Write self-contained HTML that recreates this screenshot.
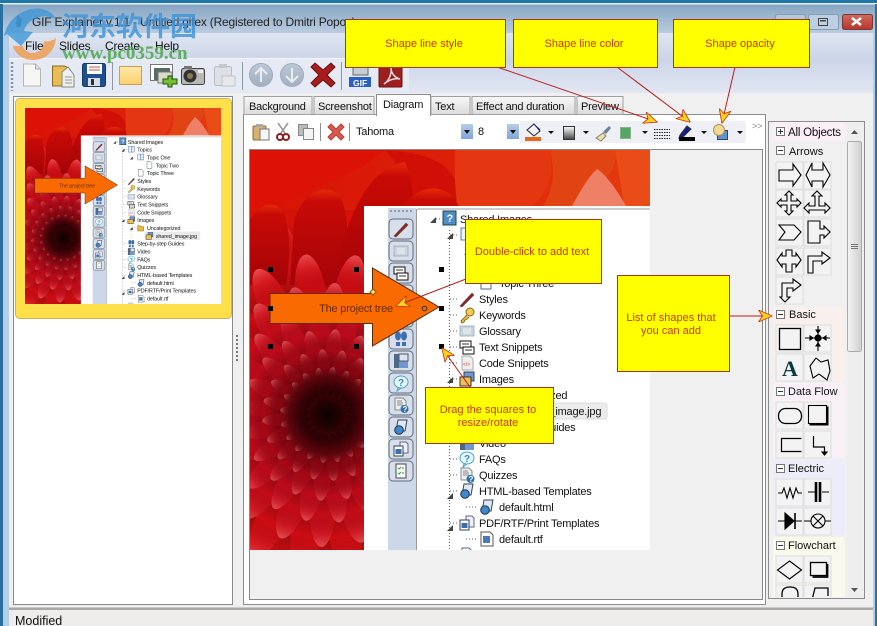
<!DOCTYPE html>
<html><head><meta charset="utf-8"><title>GIF Explainer</title>
<style>
html,body{margin:0;padding:0;background:#f0f0f0;width:877px;height:626px;overflow:hidden}
body>svg{display:block;position:absolute;left:0;top:0;overflow:hidden}
text{font-family:"Liberation Sans","DejaVu Sans",sans-serif;font-size:11px;fill:#111}
.call{font-size:11px;fill:#c83a00;text-anchor:middle}
.t{letter-spacing:-.2px}
.m{font-size:12px;letter-spacing:-.2px}
</style></head><body>
<svg width="877" height="626" viewBox="0 0 877 626" xmlns="http://www.w3.org/2000/svg">
<defs>
<linearGradient id="title" x1="0" y1="0" x2="0" y2="1"><stop offset="0" stop-color="#7e9fbe"/><stop offset="1" stop-color="#c0d0e2"/></linearGradient>
<linearGradient id="band" x1="0" y1="0" x2="0" y2="1"><stop offset="0" stop-color="#dfe6f1"/><stop offset=".45" stop-color="#ccd5e8"/><stop offset="1" stop-color="#e2e6f2"/></linearGradient>
<linearGradient id="tab" x1="0" y1="0" x2="0" y2="1"><stop offset="0" stop-color="#f8f8f8"/><stop offset="1" stop-color="#dcdcdc"/></linearGradient>
<linearGradient id="shade" x1="0" y1="1" x2="0" y2="0"><stop offset="0" stop-color="#000" stop-opacity=".62"/><stop offset=".6" stop-color="#000" stop-opacity="0"/><stop offset=".85" stop-color="#ff6060" stop-opacity=".18"/><stop offset="1" stop-color="#ff9090" stop-opacity=".5"/></linearGradient>
<radialGradient id="core"><stop offset="0" stop-color="#0e0101"/><stop offset=".3" stop-color="#1e0202" stop-opacity=".95"/><stop offset="1" stop-color="#300205" stop-opacity="0"/></radialGradient>
<linearGradient id="bp" x1="0" y1="0" x2="0" y2="1"><stop offset="0" stop-color="#e42a08"/><stop offset=".12" stop-color="#c80a06"/><stop offset="1" stop-color="#a40408"/></linearGradient>
<linearGradient id="topbg" x1="0" y1="0" x2="1" y2="0"><stop offset="0" stop-color="#d81206"/><stop offset=".5" stop-color="#dc2008"/><stop offset="1" stop-color="#e63c10"/></linearGradient>
<linearGradient id="ddb" x1="0" y1="0" x2="0" y2="1"><stop offset="0" stop-color="#b8cdea"/><stop offset="1" stop-color="#7fa6d8"/></linearGradient>
<linearGradient id="gbox" x1="0" y1="0" x2="0" y2="1"><stop offset="0" stop-color="#fff"/><stop offset="1" stop-color="#444"/></linearGradient>
<linearGradient id="red" x1="0" y1="0" x2="0" y2="1"><stop offset="0" stop-color="#d06a60"/><stop offset="1" stop-color="#b8352a"/></linearGradient>
<linearGradient id="folder" x1="0" y1="0" x2="0" y2="1"><stop offset="0" stop-color="#ffe9a8"/><stop offset="1" stop-color="#fbd06c"/></linearGradient>
<linearGradient id="scr" x1="0" y1="0" x2="1" y2="0"><stop offset="0" stop-color="#f4f4f4"/><stop offset="1" stop-color="#cfcfcf"/></linearGradient>
<linearGradient id="cir" x1="0" y1="0" x2="0" y2="1"><stop offset="0" stop-color="#bcc8d6"/><stop offset="1" stop-color="#a2afbe"/></linearGradient>

<g id="pet"><ellipse cx="0" cy="-70" rx="10" ry="30"/><ellipse cx="0" cy="-70" rx="10" ry="30" fill="url(#shade)"/></g>
<g id="pe3"><use href="#pet"/><use href="#pet" transform="rotate(18)"/><use href="#pet" transform="rotate(36)"/></g>
<g id="ring"><use href="#pe3"/><use href="#pe3" transform="rotate(54)"/><use href="#pe3" transform="rotate(108)"/><use href="#pe3" transform="rotate(162)"/><use href="#pe3" transform="rotate(216)"/><use href="#pe3" transform="rotate(270)"/><use href="#pe3" transform="rotate(324)"/></g>

<g id="i-book"><rect x="2" y="2" width="6" height="12" fill="#eef4fb" stroke="#5a7fa8"/><rect x="8" y="2" width="6" height="12" fill="#dfe9f6" stroke="#5a7fa8"/></g>
<g id="i-doc"><path d="M3 1h7l3 3v11H3z" fill="#fff" stroke="#566a80"/></g>
<g id="i-pen"><path d="M1 15L13 2l2 2L3 16z" fill="#9c1c1c" stroke="#555" stroke-width=".6"/></g>
<g id="i-key"><circle cx="11" cy="5" r="4" fill="#f0cc50" stroke="#8a6a10"/><path d="M8 8L2 14l1 2 2-1 1-2 2-1 2-2" fill="#f0cc50" stroke="#8a6a10"/></g>
<g id="i-gl"><rect x="1" y="3" width="14" height="10" fill="#c8d4e2" stroke="#a6b4c4"/><rect x="4" y="5" width="8" height="6" fill="#dfe3e8"/></g>
<g id="i-sn"><rect x="1" y="2" width="11" height="7" fill="#fff" stroke="#111"/><rect x="4" y="8" width="11" height="7" fill="#fff" stroke="#111"/><path d="M3 5h7M6 11h7" stroke="#333"/></g>
<g id="i-code"><path d="M3 1h8l3 3v11H3z" fill="#eee" stroke="#aaa"/><text x="4" y="11" style="font-size:5px;fill:#d04040">&lt;/&gt;</text></g>
<g id="i-im"><rect x="5" y="1" width="10" height="9" fill="#6f97d0" stroke="#345"/><rect x="1" y="6" width="11" height="9" fill="#f2c050" stroke="#333"/></g>
<g id="i-fo"><path d="M2 3h5l2 2h5v9H2z" fill="#e8b840" stroke="#8a6a18"/></g>
<g id="i-foot"><ellipse cx="5" cy="5" rx="3" ry="4.500" fill="#3d6fb0"/><ellipse cx="11" cy="5" rx="3" ry="4.500" fill="#3d6fb0"/><rect x="3" y="11" width="4" height="4" fill="#3d6fb0"/><rect x="9" y="11" width="4" height="4" fill="#3d6fb0"/></g>
<g id="i-film"><rect x="1" y="1" width="5" height="14" fill="#4a6a8a"/><rect x="6" y="8" width="9" height="7" fill="#6f97d0"/><rect x="6" y="1" width="9" height="7" fill="#dde4ee" stroke="#556"/></g>
<g id="i-faq"><ellipse cx="8" cy="7" rx="7" ry="6" fill="#e8f6fb" stroke="#43a5cc"/><path d="M5 13l-1 3 4-3z" fill="#e8f6fb" stroke="#43a5cc"/><text x="5" y="11" style="font-size:10px;fill:#2f8db8;font-weight:bold">?</text></g>
<g id="i-qz"><path d="M2 1h8l3 3v9H2z" fill="#eee" stroke="#888"/><path d="M4 4h5M4 6h6M4 8h6" stroke="#889"/><circle cx="11.500" cy="12" r="4" fill="#2f6fb0"/><text x="9.500" y="15" style="font-size:8px;fill:#fff;font-weight:bold">?</text></g>
<g id="i-ht"><path d="M5 1h9l-2 11H3z" fill="#dfe9f6" stroke="#345"/><circle cx="6" cy="11" r="4.300" fill="#3d86d0" stroke="#234"/></g>
<g id="i-wd"><path d="M7 1h6l2 2v9H7z" fill="#eef" stroke="#667"/><rect x="1" y="5" width="9" height="10" fill="#fff" stroke="#345"/><rect x="2.500" y="8" width="6" height="5" fill="#3d6fb0"/></g>
<g id="i-wd1"><path d="M2 1h9l3 3v11H2z" fill="#fff" stroke="#555"/><rect x="4" y="5" width="7" height="7" fill="#4a78b8"/></g>
<g id="i-qs"><rect x="1" y="1" width="13" height="14" fill="#4f8cc8" stroke="#244"/><text x="4.500" y="12" style="font-size:11px;fill:#fff;font-weight:bold">?</text></g>
<g id="i-tk"><rect x="3" y="1" width="10" height="14" fill="#f6fbf6" stroke="#445"/><path d="M5 5l1 1 2-2M5 10l1 1 2-2" stroke="#3a3" fill="none"/><path d="M9 5h2M9 10h2" stroke="#667"/></g>
<path id="exp" d="M0 4l6-6v6z" fill="#444"/>

<g id="btn"><rect x="-12" y="-10" width="24" height="20" rx="4" fill="#d8dfea" stroke="#5f6d7a"/></g>

<clipPath id="cp"><rect width="400" height="400"/></clipPath>
<g id="dia" clip-path="url(#cp)">
 <rect width="400" height="400" fill="#6a0408"/>
 <g transform="translate(78,265)">
  <use href="#ring" transform="rotate(7) scale(2.6)" fill="#d81208"/>
  <use href="#ring" transform="rotate(2) scale(2.05)" fill="#d41010"/>
 </g>
 <!-- big upper petals -->
 <rect width="400" height="60" fill="url(#topbg)"/>
 <path d="M205 0H300C305 30 295 50 275 60H205z" fill="#e43610"/>
 <path d="M300 0H365C370 20 350 30 340 60H290C305 40 305 20 300 0z" fill="#e04412"/>
 <path d="M365 0H400V60H375z" fill="#ea4c18"/>
 <path d="M347 19C357 25 370 45 376 56H322C328 45 338 27 347 19z" fill="#ee8068"/>
 <path d="M135 0C160 2 195 6 205 30L207 60H160L145 12z" fill="#d01006"/>
 <path d="M0 0H135C110 20 85 30 60 40L0 70z" fill="#dc1206"/>
 <path d="M0 72C4 58 22 48 32 60C42 80 40 110 36 135L0 135z" fill="url(#bp)"/>
 <path d="M44 72C50 48 70 30 90 45C100 70 100 100 95 135L40 135z" fill="url(#bp)"/>
 <path d="M90 105C100 60 122 16 155 12C168 40 165 85 150 135L95 135z" fill="url(#bp)"/>
 <path d="M150 58C165 40 185 30 205 48L210 60L150 135z" fill="url(#bp)"/>
 <g transform="translate(78,265)">
  <use href="#ring" transform="rotate(10) scale(1.62)" fill="#cc0c12"/>
  <use href="#ring" transform="rotate(3) scale(1.32)" fill="#c40c18"/>
  <use href="#ring" transform="rotate(12) scale(1.08)" fill="#bc0a1a"/>
  <use href="#ring" transform="rotate(5) scale(.86)" fill="#a80816"/>
  <use href="#ring" transform="rotate(13) scale(.66)" fill="#8a0612"/>
  <use href="#ring" transform="rotate(6) scale(.48)" fill="#5e040c"/>
  <circle r="42" fill="url(#core)"/>
 </g>
 <rect x="114" y="56" width="286" height="344" fill="#fff"/>
 <rect x="138" y="58" width="28" height="342" fill="#cdd7ea"/>
 <path d="M140 61h24" stroke="#999" stroke-width="2" stroke-dasharray="2 2"/>
 <path d="M166.500 59V400M167 59H400" stroke="#9a9a9a" fill="none"/>
 <g transform="translate(151,79)"><use href="#btn"/><use href="#i-pen" x="-8" y="-8"/></g>
 <g transform="translate(151,101)"><use href="#btn"/><use href="#i-gl" x="-8" y="-8"/></g>
 <g transform="translate(151,123)"><use href="#btn"/><use href="#i-sn" x="-8" y="-8"/></g>
 <g transform="translate(151,145)"><use href="#btn"/></g>
 <g transform="translate(151,167)"><use href="#btn"/></g>
 <g transform="translate(151,189)"><use href="#btn"/><use href="#i-foot" x="-8" y="-8"/></g>
 <g transform="translate(151,211)"><use href="#btn"/><use href="#i-film" x="-8" y="-8"/></g>
 <g transform="translate(151,233)"><use href="#btn"/><use href="#i-faq" x="-8" y="-8"/></g>
 <g transform="translate(151,255)"><use href="#btn"/><use href="#i-qz" x="-8" y="-8"/></g>
 <g transform="translate(151,277)"><use href="#btn"/><use href="#i-ht" x="-8" y="-8"/></g>
 <g transform="translate(151,299)"><use href="#btn"/><use href="#i-wd" x="-8" y="-8"/></g>
 <g transform="translate(151,321)"><use href="#btn"/><use href="#i-tk" x="-8" y="-8"/></g>
 <g stroke="#666" stroke-dasharray="1 2" fill="none">
  <path d="M199.500 80V400M216.500 240V265"/>
  <path d="M186 69h6M200 85h8M200 149h8M200 165h8M200 181h8M200 197h8M200 213h8M200 229h8M200 277h8M200 293h8M200 309h8M200 325h8M200 341h8M200 373h8M216 357h12M216 389h12M216 245h10"/>
 </g>
 <rect x="245" y="253" width="112" height="16" rx="2" fill="#ececec" stroke="#ddd"/>
 <use href="#exp" x="180" y="69"/><use href="#i-qs" x="192" y="60"/><text x="210" y="73" class="t">Shared Images</text>
 <use href="#exp" x="197" y="85"/><use href="#i-book" x="209" y="76"/><text x="229" y="89" class="t">Topics</text>
 <use href="#exp" x="214" y="101"/><use href="#i-book" x="228" y="92"/><text x="249" y="105" class="t">Topic One</text>
 <use href="#i-doc" x="246" y="108"/><text x="267" y="121" class="t">Topic Two</text>
 <use href="#i-doc" x="228" y="124"/><text x="249" y="137" class="t">Topic Three</text>
 <use href="#i-pen" x="209" y="141"/><text x="229" y="153" class="t">Styles</text>
 <use href="#i-key" x="209" y="157"/><text x="229" y="169" class="t">Keywords</text>
 <use href="#i-gl" x="209" y="173"/><text x="229" y="185" class="t">Glossary</text>
 <use href="#i-sn" x="209" y="189"/><text x="229" y="201" class="t">Text Snippets</text>
 <use href="#i-code" x="209" y="205"/><text x="229" y="217" class="t">Code Snippets</text>
 <use href="#exp" x="197" y="229"/><use href="#i-im" x="209" y="221"/><text x="229" y="233" class="t">Images</text>
 <use href="#exp" x="214" y="245"/><use href="#i-fo" x="228" y="237"/><text x="249" y="249" class="t">Uncategorized</text>
 <use href="#i-im" x="246" y="253"/><text x="267" y="265" class="t">shared_image.jpg</text>
 <use href="#i-foot" x="209" y="269"/><text x="229" y="281" class="t">Step-by-step Guides</text>
 <use href="#i-film" x="209" y="285"/><text x="229" y="297" class="t">Video</text>
 <use href="#i-faq" x="209" y="301"/><text x="229" y="313" class="t">FAQs</text>
 <use href="#i-qz" x="209" y="317"/><text x="229" y="329" class="t">Quizzes</text>
 <use href="#exp" x="197" y="345"/><use href="#i-ht" x="209" y="333"/><text x="229" y="345" class="t">HTML-based Templates</text>
 <use href="#i-ht" x="229" y="349"/><text x="249" y="361" class="t">default.html</text>
 <use href="#exp" x="197" y="377"/><use href="#i-wd" x="209" y="365"/><text x="229" y="377" class="t">PDF/RTF/Print Templates</text>
 <use href="#i-wd1" x="229" y="381"/><text x="249" y="393" class="t">default.rtf</text>
 <use href="#i-doc" x="209" y="397"/>
 <path d="M20 143.500H122.500V118L189 157 122.500 196V173.500H20z" fill="#f96a00" stroke="#5f2a08"/>
 <text x="106" y="162" style="text-anchor:middle;fill:#6b2c00" class="t">The project tree</text>
</g>

<g id="cell"><rect width="27" height="27" fill="#f3f3f3" stroke="#dfdfdf"/></g>
<clipPath id="pnl"><rect x="769" y="122" width="78" height="475"/></clipPath>
<marker id="ah" viewBox="0 0 14 12" refX="13.500" refY="6" markerWidth="14" markerHeight="12" markerUnits="userSpaceOnUse" orient="auto"><path d="M0 0L14 6 0 12 4 6z" fill="#f8d020" stroke="#c83010" stroke-width=".8"/></marker>
</defs>

<rect width="877" height="626" fill="#f0f0f0"/>
<rect width="877" height="36" fill="url(#title)"/>
<rect y="0" width="877" height="3" fill="#1f77a8"/>
<rect y="3" width="877" height="1.500" fill="#e6eff6"/>
<rect x="9" y="33" width="864" height="60" fill="url(#band)"/>
<rect x="0" y="4" width="3" height="622" fill="#2a6fa0"/>
<rect x="3" y="30" width="6" height="596" fill="#b4cee6"/>
<rect x="873" y="30" width="4" height="596" fill="#b4cee6"/>
<rect x="875" y="4" width="2" height="622" fill="#2a6fa0"/>

<rect x="9" y="59" width="400" height="33" fill="#e6eaf4"/>
<path d="M9 58.500H409" stroke="#f6f7fb"/>
<path d="M12 62V91" stroke="#8a96a6" stroke-width="2.500" stroke-dasharray="2 2"/>
<text x="32" y="26" class="m" style="fill:#222">GIF Explainer v.1.1 - Untitled.gifex (Registered to Dmitri Popov)</text>
<path d="M17 15l5 4-1 8h-5z" fill="#3a6a90"/>
<text x="25" y="50" class="m">File</text><text x="59" y="50" class="m">Slides</text><text x="105" y="50" class="m">Create</text><text x="155" y="50" class="m">Help</text>

<path d="M23.500 64h12l5 5v17h-17z" fill="#f6f6f4" stroke="#b8b8b0"/><path d="M35.500 64v5h5" fill="#ddd" stroke="#aaa"/>
<path d="M52.500 66h12l4 2v18h-16z" fill="#e8bd55" stroke="#8a6a20"/><path d="M62 72l6-5 6 8v12H62z" fill="#efefef" stroke="#8a8a7a"/><path d="M65 77h7M65 80h7M65 83h7" stroke="#999"/>
<rect x="82.500" y="63.500" width="23" height="23" rx="2" fill="#1e4f8e" stroke="#123a66"/><rect x="87" y="64" width="15" height="10" fill="#fff"/><path d="M89 67h11M89 70h11" stroke="#b55"/><rect x="88" y="78" width="12" height="8" fill="#d8dde4"/><rect x="91" y="79" width="3" height="6" fill="#234"/>
<path d="M112.500 62V90" stroke="#8f98a6"/>
<rect x="119.500" y="66.500" width="22" height="18" fill="url(#folder)" stroke="#c8a050"/>
<rect x="150.500" y="64.500" width="22" height="16" fill="#fff" stroke="#777"/><rect x="154" y="68" width="16" height="12" fill="#5a6a6a"/><rect x="158" y="72" width="14" height="11" fill="#d8dcc8" stroke="#777"/><path d="M168 76v3h-5v5h5v3h4v-3h5v-5h-5v-3z" fill="#74c030" stroke="#245010"/>
<rect x="181.500" y="68.500" width="23" height="16" rx="2" fill="#b8b8b4" stroke="#444"/><rect x="184" y="66" width="8" height="3" fill="#777"/><circle cx="190" cy="76" r="6.500" fill="#333"/><circle cx="190" cy="76" r="3" fill="#8a7a5a"/><rect x="198" y="70" width="5" height="3" fill="#eee"/>
<rect x="214.500" y="66.500" width="17" height="19" rx="2" fill="#dde0e4" stroke="#b6bcc4"/><rect x="219" y="64" width="8" height="4" fill="#c4c8ce"/><rect x="222" y="76" width="13" height="10" fill="#e8e8e8" stroke="#c0c4ca"/>
<path d="M242.500 62V90" stroke="#8f98a6"/>
<circle cx="261" cy="75" r="11.500" fill="url(#cir)" stroke="#9eacbc"/><path d="M261 82V68M255 74l6-6 6 6" fill="none" stroke="#e8edf2" stroke-width="2"/>
<circle cx="292" cy="75" r="11.500" fill="url(#cir)" stroke="#9eacbc"/><path d="M292 68V82M286 76l6 6 6-6" fill="none" stroke="#e8edf2" stroke-width="2"/>
<path d="M311 67l4-4 8 7 8-7 4 4-8 8 8 8-4 4-8-7-8 7-4-4 8-8z" fill="#a81c1c" stroke="#6a1010"/>
<path d="M341.500 62V90" stroke="#8f98a6"/>
<rect x="353" y="64" width="15" height="11" fill="#c6ccd4" stroke="#666"/><rect x="349" y="77" width="22" height="10" fill="#2a5fc8"/><text x="353" y="86" style="font-size:8.500px;fill:#fff;font-weight:bold">GIF</text>
<rect x="379" y="64" width="23" height="23" rx="1" fill="#9e1f1f" stroke="#6e1010"/><path d="M384 84c5-3 8-11 7-16 0 5 4 10 9 11-5-1-10 0-16 5z" fill="none" stroke="#f3e8e8" stroke-width="1.400"/>

<rect x="775.500" y="14.500" width="30" height="15" rx="2" fill="#b6c8dc" stroke="#8a9bb0"/>
<rect x="808.500" y="14.500" width="30" height="15" rx="2" fill="#bdcfe2" stroke="#8a9bb0"/><rect x="818.500" y="18.500" width="9" height="7" fill="none" stroke="#444"/><rect x="820" y="20" width="6" height="1.500" fill="#444"/>
<rect x="842.500" y="14.500" width="30" height="15" rx="2" fill="url(#red)" stroke="#7a3a3a"/><path d="M852 18l9 7M861 18l-9 7" stroke="#fff" stroke-width="2.400"/>

<rect x="13.500" y="96.500" width="219" height="508" fill="#fff" stroke="#8a8a8a"/>
<rect x="15.500" y="98.500" width="216" height="220" rx="4" fill="#ffdf4a" stroke="#c8b468"/>
<svg x="25" y="108" width="196" height="196" viewBox="0 0 400 400"><use href="#dia"/></svg>
<path d="M237 335V361" stroke="#777" stroke-width="2" stroke-dasharray="2 2"/>

<rect x="243.500" y="114.500" width="522" height="490" fill="#fff" stroke="#8c8c8c"/>
<rect x="244" y="96.500" width="68" height="18" fill="url(#tab)" stroke="#a0a0a0"/><text x="249" y="110" class="t">Background</text>
<rect x="314" y="96.500" width="60" height="18" fill="url(#tab)" stroke="#a0a0a0"/><text x="318" y="110" class="t">Screenshot</text>
<rect x="376.500" y="94.500" width="54" height="21" fill="#fff" stroke="#8c8c8c"/><path d="M377 115.500h53" stroke="#fff" stroke-width="2"/><text x="383" y="108" class="t">Diagram</text>
<rect x="431" y="96.500" width="39" height="18" fill="url(#tab)" stroke="#a0a0a0"/><text x="435" y="110" class="t">Text</text>
<rect x="472" y="96.500" width="103" height="18" fill="url(#tab)" stroke="#a0a0a0"/><text x="476" y="110" class="t">Effect and duration</text>
<rect x="577" y="96.500" width="46" height="18" fill="url(#tab)" stroke="#a0a0a0"/><text x="581" y="110" class="t">Preview</text>

<rect x="253" y="126" width="13" height="14" rx="1" fill="#d8b070" stroke="#8a6a30"/><rect x="256" y="124" width="7" height="3" fill="#aaa"/><rect x="260" y="129" width="9" height="11" fill="#f6f6f6" stroke="#777"/>
<path d="M278 123l7 10M288 123l-7 10" stroke="#999" stroke-width="1.600"/><circle cx="280" cy="137" r="3" fill="none" stroke="#8e1f1f" stroke-width="2"/><circle cx="286" cy="137" r="3" fill="none" stroke="#8e1f1f" stroke-width="2"/>
<rect x="298.500" y="124.500" width="9" height="11" fill="#bbb" stroke="#888"/><rect x="303.500" y="128.500" width="10" height="11" fill="#f4f4f4" stroke="#888"/>
<path d="M320.500 123V141M349.500 123V141" stroke="#8f8f8f"/>
<path d="M328 127l3-3 5 5 5-5 3 3-5 5 5 5-3 3-5-5-5 5-3-3 5-5z" fill="#d85a4e" stroke="#b04038"/>
<text x="356" y="135" class="t">Tahoma</text>
<rect x="461" y="124" width="12" height="15" fill="url(#ddb)"/><path d="M464 130h6l-3 4z" fill="#111"/>
<text x="478" y="135">8</text>
<rect x="507" y="124" width="12" height="15" fill="url(#ddb)"/><path d="M510 130h6l-3 4z" fill="#111"/>
<rect x="520" y="121" width="226" height="22" fill="#eef0f5"/>
<path d="M527 130l7-6 6 7-6 5z" fill="#f2f2f2" stroke="#223"/><path d="M533 123l7 6v3l-2-3z" fill="#12288a"/><rect x="525" y="137" width="16" height="4" fill="#e06a1c"/>
<path d="M548 131h6l-3 3z" fill="#111"/>
<rect x="563.500" y="126.500" width="11" height="13" fill="url(#gbox)" stroke="#333"/>
<path d="M583 131h6l-3 3z" fill="#111"/>
<path d="M596 138l7-5 3 3-5 5z" fill="#e8e0b0" stroke="#8a8060"/><path d="M603 132l6-6 2 2-5 6z" fill="#6b7f99"/>
<rect x="620.500" y="127.500" width="10" height="11" fill="#54a860" stroke="#8ab090"/>
<path d="M642 131h6l-3 3z" fill="#111"/>
<path d="M654 129.500h16M654 132.500h16M654 135.500h16M654 138.500h16" stroke="#222" stroke-dasharray="1.500 1"/>
<path d="M680 135l7-9 4 3-8 8-4 1z" fill="#10208a" stroke="#333"/><rect x="679" y="137" width="16" height="4" fill="#000"/>
<path d="M701 131h6l-3 3z" fill="#111"/>
<rect x="717.500" y="130.500" width="10" height="9" fill="#5b92d8" stroke="#345"/><circle cx="719" cy="130" r="5.500" fill="#f1da96" stroke="#a89050"/>
<path d="M737 131h6l-3 3z" fill="#111"/>
<text x="752" y="129" style="font-size:9px;fill:#889">&gt;&gt;</text>

<rect x="249.500" y="149.500" width="513" height="450" fill="#f0f0f0" stroke="#888"/>
<svg x="250" y="150" width="400" height="400" viewBox="0 0 400 400"><use href="#dia"/></svg>

<rect x="9" y="605" width="864" height="21" fill="#efecec"/>
<rect x="9" y="607.500" width="864" height="2.500" fill="#a8a8a8"/>
<text x="15" y="625" style="font-size:12.500px">Modified</text>

<rect x="768.500" y="121.500" width="96" height="477" fill="#f0f0f0" stroke="#8c8c8c"/>
<rect x="773" y="122" width="72" height="19" rx="3" fill="#faeef7"/>
<rect x="776.500" y="127.500" width="8" height="8" fill="#fff" stroke="#777"/><path d="M778 131.500h5M780.500 129v5" stroke="#333"/>
<text x="788" y="136" style="font-size:11.500px;letter-spacing:-.2px">All Objects</text>
<rect x="776.500" y="146.500" width="8" height="8" fill="#fff" stroke="#777"/><path d="M778 150.500h5" stroke="#333"/><text x="789" y="155">Arrows</text>

<g fill="none" stroke="#000" stroke-width="1.100" clip-path="url(#pnl)">
 <rect x="773" y="307" width="72" height="75" rx="3" fill="#f9f0ee" stroke="none"/>
 <rect x="773" y="383" width="72" height="75" rx="3" fill="#f9f0f8" stroke="none"/>
 <rect x="773" y="460" width="72" height="75" rx="3" fill="#ecedf9" stroke="none"/>
 <rect x="773" y="537" width="72" height="70" rx="3" fill="#fafaec" stroke="none"/>

 <use href="#cell" x="776" y="162"/><use href="#cell" x="804" y="162"/>
 <use href="#cell" x="776" y="190"/><use href="#cell" x="804" y="190"/>
 <use href="#cell" x="776" y="219"/><use href="#cell" x="804" y="219"/>
 <use href="#cell" x="776" y="248"/><use href="#cell" x="804" y="248"/>
 <use href="#cell" x="776" y="277"/>
 <path d="M779 170h14v-6l8 11-8 11v-5h-14z"/>
 <path d="M806 175l6-12v7h11v-7l7 12-7 12v-6h-11v6z"/>
 <path d="M789 191l4 4h-2v6h6v-2l4 4-4 4v-2h-6v6h2l-4 4-4-4h2v-6h-6v2l-4-4 4-4v2h6v-6h-2z"/>
 <path d="M817 191l5 5h-3v10h6v-3l5 5-5 5v-3h-16v3l-5-5 5-5v3h6v-10h-3z"/>
 <path d="M779 225h15l7 7-7 8h-15l6-8z"/>
 <path d="M808 221h12v8h4v-3l6 6-6 6v-3h-4v8h-12z"/>
 <path d="M786 250h6v6h4v-3l5 7-5 7v-3h-4v8h-6v-8h-4v3l-5-7 5-7v3h4z"/>
 <path d="M808 273v-17h14v-4l8 6-8 6v-3h-9v12z"/>
 <path d="M793 279l8 6-8 6v-3h-6v9h3l-5 5-5-5h2v-14h11z"/>

 <use href="#cell" x="776" y="325"/><use href="#cell" x="804" y="325"/><use href="#cell" x="776" y="354"/><use href="#cell" x="804" y="354"/>
 <rect x="779.500" y="328.500" width="21" height="21" stroke-width="1.300"/>
 <path d="M805 338h25M818 326v25"/><circle cx="818" cy="338" r="3" fill="#000"/><path d="M810 336l3 2-3 2zM826 336l-3 2 3 2zM816 330l2 3 2-3zM816 346l2-3 2 3z" fill="#000"/>
 <text x="790" y="376" style="font-family:'Liberation Serif',serif;font-size:22px;font-weight:bold;fill:#0c3a3a;text-anchor:middle;stroke:none">A</text>
 <path d="M810 366l6-8 5 4 7-2 2 11-3 9-8-6-6 4z"/>

 <use href="#cell" x="776" y="402"/><use href="#cell" x="804" y="402"/><use href="#cell" x="776" y="431"/><use href="#cell" x="804" y="431"/>
 <rect x="778.500" y="408.500" width="23" height="15" rx="7" stroke-width="1.300"/>
 <rect x="808.500" y="405.500" width="18" height="18" fill="#f3f3f3"/><path d="M827.500 406.500v18h-18" stroke-width="2"/>
 <path d="M801.500 438.500h-20v13h20" stroke-width="1.200"/>
 <path d="M813.500 436v11h11v7" stroke-width="1.200"/><path d="M822 452h5l-2.500 3z" fill="#000"/>

 <use href="#cell" x="776" y="479"/><use href="#cell" x="804" y="479"/><use href="#cell" x="776" y="508"/><use href="#cell" x="804" y="508"/>
 <path d="M778 493h4l2-5 3 10 3-10 3 10 3-10 2 5h4"/>
 <path d="M808 492h7M822 492h7"/><path d="M816 482v20M820 482v20" stroke-width="2.600"/>
 <path d="M778 521h24"/><path d="M785 513l9 8-9 8z" fill="#000"/><path d="M795 513v16" stroke-width="1.600"/>
 <circle cx="818" cy="521" r="7"/><path d="M804 521h7M825 521h6M813 516l10 10M823 516l-10 10"/>

 <use href="#cell" x="776" y="556"/><use href="#cell" x="804" y="556"/><use href="#cell" x="776" y="585"/><use href="#cell" x="804" y="585"/>
 <path d="M789.500 561l12 9-12 9-12-9z"/>
 <rect x="810.500" y="562.500" width="16" height="13" stroke-width="1.300"/><path d="M827.500 564v13h-15" stroke-width="1.800"/>
 <path d="M782 600v-6c0-5 3-7 8-7s8 2 8 7v6" stroke-width="1.300"/>
 <path d="M812 600l3-12h13v8" stroke-width="1.300"/>
</g>
<rect x="776.500" y="310.500" width="8" height="8" fill="#fff" stroke="#777"/><path d="M778 314.500h5" stroke="#333"/><text x="789" y="318">Basic</text>
<rect x="776.500" y="387.500" width="8" height="8" fill="#fff" stroke="#777"/><path d="M778 391.500h5" stroke="#333"/><text x="788" y="395">Data Flow</text>
<rect x="776.500" y="464.500" width="8" height="8" fill="#fff" stroke="#777"/><path d="M778 468.500h5" stroke="#333"/><text x="788" y="472">Electric</text>
<rect x="776.500" y="541.500" width="8" height="8" fill="#fff" stroke="#777"/><path d="M778 545.500h5" stroke="#333"/><text x="788" y="549">Flowchart</text>

<rect x="847" y="122" width="15" height="476" fill="#eeeeee"/>
<path d="M851 134l3.500-4 3.500 4z" fill="#555"/><path d="M851 588l3.500 4 3.500-4z" fill="#555"/>
<rect x="847.500" y="141.500" width="14" height="210" rx="2" fill="url(#scr)" stroke="#aaa"/>
<path d="M851 244.500h7M851 246.500h7M851 248.500h7" stroke="#777"/>

<g fill="#000">
<rect x="268" y="267" width="5" height="5"/><rect x="354" y="267" width="5" height="5"/><rect x="439" y="267" width="5" height="5"/>
<rect x="268" y="306" width="5" height="5"/><rect x="439" y="306" width="5" height="5"/>
<rect x="268" y="344" width="5" height="5"/><rect x="354" y="344" width="5" height="5"/><rect x="439" y="344" width="5" height="5"/>
</g>
<path d="M373 289l3 3-3 3-3-3z" fill="#ffe060" stroke="#8a5a10"/>
<circle cx="424.500" cy="308.500" r="2.300" fill="none" stroke="#333"/>

<g stroke="#b82020" fill="none" stroke-width="1">
<path d="M497 67L657 122" marker-end="url(#ah)"/>
<path d="M617 67L690 122" marker-end="url(#ah)"/>
<path d="M735 67L722 123" marker-end="url(#ah)"/>
<path d="M466 279L396 306" marker-end="url(#ah)"/>
<path d="M470 387L442 348" marker-end="url(#ah)"/>
<path d="M730 316H772" marker-end="url(#ah)"/>
</g>

<g fill="#ffff00" stroke="#a83a12" stroke-width="1">
<rect x="345.500" y="19.500" width="160" height="48"/>
<rect x="513.500" y="19.500" width="144" height="48"/>
<rect x="673.500" y="19.500" width="136" height="48"/>
<rect x="465.500" y="219.500" width="136" height="64"/>
<rect x="617.500" y="275.500" width="112" height="96"/>
<rect x="425.500" y="387.500" width="128" height="56"/>
</g>
<text class="call" x="424" y="47">Shape line style</text>
<text class="call" x="584" y="47">Shape line color</text>
<text class="call" x="740" y="47">Shape opacity</text>
<text class="call" x="532" y="255">Double-click to add text</text>
<text class="call" x="671" y="321">List of shapes that</text>
<text class="call" x="671" y="334">you can add</text>
<text class="call" x="488" y="413">Drag the squares to</text>
<text class="call" x="488" y="426">resize/rotate</text>

<g opacity=".8">
<path d="M4 36C8 16 28 6 42 9c8 2 12 6 14 10-10-4-16-3-22 0 0 0-8 4-10 12l9 1-12 14-14-12z" fill="#3f97d8"/>
<path d="M13 46c2 8 10 14 20 14 14 0 22-10 23-22-4 3-8 4-12 3 0 7-5 12-11 12-6 0-9-3-10-7z" fill="#f29a4a"/>
</g>
<text x="62" y="36" style="font-family:'Noto Sans CJK SC','Noto Serif CJK SC',sans-serif;font-size:27px;font-weight:bold;fill:#3b93d9;opacity:.8">河东软件园</text>
<text x="62" y="59" style="font-family:'Liberation Serif',serif;font-size:19px;font-weight:bold;fill:#4aa84a;opacity:.85">www.pc0359.cn</text>
</svg>
</body></html>
